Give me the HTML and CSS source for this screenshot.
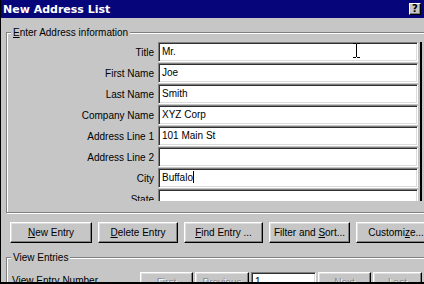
FILE: index.html
```html
<!DOCTYPE html>
<html lang="en">
<head>
    <meta charset="UTF-8">
    <title>New Address List</title>
    <link rel="stylesheet" href="styles.css">
</head>
<body>

    <div class="window">
        <div class="titlebar">
            <span class="title">New Address List</span>
            <span class="help-btn">?</span>
        </div>

        <div class="content">
            <fieldset class="group address-group">
                <legend><u>E</u>nter Address information</legend>

                <div class="fields">
                    <label>Title</label>
                    <div class="textbox">Mr.</div>
                    <label>First Name</label>
                    <div class="textbox">Joe</div>
                    <label>Last Name</label>
                    <div class="textbox">Smith</div>
                    <label>Company Name</label>
                    <div class="textbox">XYZ Corp</div>
                    <label>Address Line 1</label>
                    <div class="textbox">101 Main St</div>
                    <label>Address Line 2</label>
                    <div class="textbox"></div>
                    <label>City</label>
                    <div class="textbox">Buffalo<span class="caret"></span></div>
                    <label>State</label>
                    <div class="textbox"></div>
                </div>
            </fieldset>

            <div class="actions">
                <button class="btn btn-new"><u>N</u>ew Entry</button>
                <button class="btn btn-delete"><u>D</u>elete Entry</button>
                <button class="btn btn-find"><u>F</u>ind Entry ...</button>
                <button class="btn btn-filter">Filter and <u>S</u>ort...</button>
                <button class="btn btn-custom">Customi<u>z</u>e...</button>
            </div>

            <fieldset class="group view-group">
                <legend>View Entries</legend>
                <div class="nav-row">
                    <span class="nav-label">View Entry Number</span>
                    <button class="btn btn-nav" disabled>First</button>
                    <button class="btn btn-nav btn-prev" disabled>Previous</button>
                    <div class="textbox entry-number">1</div>
                    <button class="btn btn-nav" disabled>Next</button>
                    <button class="btn btn-nav btn-last" disabled>Last</button>
                </div>
            </fieldset>
        </div>

        <!-- mouse pointer over the Title box -->
        <svg class="ibeam" width="7" height="15" viewBox="0 0 7 15">
            <path d="M0 0.5h3M4 0.5h3M3.5 1v13M0 14.5h3M4 14.5h3" stroke="#000" stroke-width="1" fill="none"/>
        </svg>
    </div>

</body>
</html>
```

FILE: styles.css
```css
/* Classic Windows dialog look */
* {
    box-sizing: border-box;
}

body {
    margin: 0;
    font-family: "Liberation Sans", Arial, sans-serif;
    font-size: 10px;
    background-color: #c6c6c6;
    overflow: hidden;
}

.window {
    position: relative;
    width: 424px;
    height: 284px;
    border-left: 1px solid #000;
    border-bottom: 2px solid #000;
    background-color: #c6c6c6;
    overflow: hidden;
}

.titlebar {
    height: 18px;
    background-color: #06067a;
    color: #fff;
    display: flex;
    align-items: center;
    justify-content: space-between;
    padding: 0 3px 0 2px;
}

.title {
    font-family: "DejaVu Sans", sans-serif;
    font-weight: bold;
    font-size: 11px;
}

.help-btn {
    width: 12px;
    height: 12px;
    background-color: #c6c6c6;
    color: #000;
    font-family: "DejaVu Sans", sans-serif;
    font-weight: bold;
    font-size: 10px;
    line-height: 10px;
    text-align: center;
    border: 1px solid;
    border-color: #fff #000 #000 #fff;
    box-shadow: inset -1px -1px #808080;
}

.content {
    padding: 8px 0 0 5px;
}

/* etched group boxes */
.group {
    margin: 0;
    padding: 0;
    border: 1px solid #808080;
    box-shadow: inset 1px 1px #fff, 1px 1px #fff;
    width: 430px;
}

.group legend {
    margin-left: 4px;
    padding: 0 2px;
    line-height: 13px;
    background-color: #c6c6c6;
    color: #000;
}

.address-group {
    padding: 3px 0 11px 0;
}

.fields {
    display: grid;
    grid-template-columns: 147px 260px;
    grid-auto-rows: 20px;
    column-gap: 4px;
    row-gap: 1px;
    height: 159px;
    width: 415px;
    overflow: hidden;
    border-right: 2px solid #000;
}

.fields label {
    text-align: right;
    align-self: center;
    color: #000;
}

.textbox {
    height: 20px;
    background-color: #fff;
    border: 1px solid;
    border-color: #808080 #fff #fff #808080;
    box-shadow: inset 1px 1px #303030, inset -1px -1px #dcdcdc;
    padding: 0 3px;
    line-height: 18px;
    white-space: nowrap;
    color: #000;
}

.caret {
    display: inline-block;
    width: 1px;
    height: 12px;
    background-color: #000;
    vertical-align: -2px;
}

.actions {
    display: flex;
    gap: 6px;
    margin: 9px 0 0 4px;
}

.btn {
    height: 21px;
    padding: 0;
    font-family: "Liberation Sans", Arial, sans-serif;
    font-size: 10px;
    color: #000;
    background-color: #c6c6c6;
    border: 1px solid;
    border-color: #fff #000 #000 #fff;
    box-shadow: inset -1px -1px #808080, inset 1px 1px #dedede;
    flex: none;
}

.btn:disabled {
    color: #8a8a8a;
    text-shadow: 1px 1px #fff;
}

.btn-new {
    width: 82px;
}

.btn-delete {
    width: 80px;
}

.btn-find {
    width: 79px;
}

.btn-filter {
    width: 81px;
}

.btn-custom {
    width: 80px;
}

.view-group {
    margin-top: 8px;
    padding: 0;
}

.nav-row {
    display: flex;
    align-items: flex-start;
    gap: 2px;
    padding: 8px 0 0 5px;
}

.nav-label {
    width: 126px;
    padding-top: 3px;
}

.btn-nav {
    width: 53px;
}

.btn-prev {
    width: 54px;
}

.btn-last {
    width: 49px;
}

.entry-number {
    width: 65px;
    height: 21px;
}

.ibeam {
    position: absolute;
    left: 352px;
    top: 43px;
}
```
